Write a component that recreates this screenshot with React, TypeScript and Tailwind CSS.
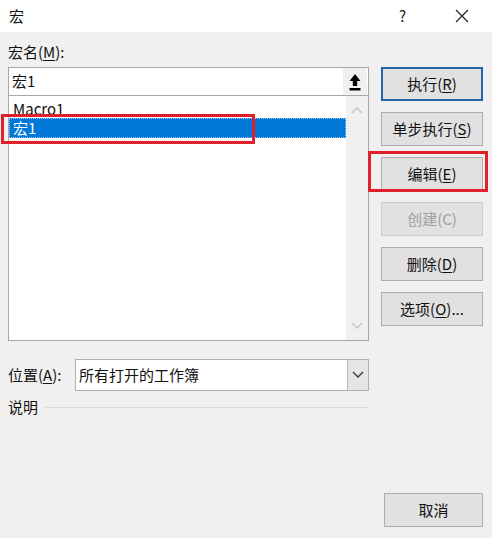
import React from "react";

const F = { fontFamily: '"Microsoft YaHei UI", "Noto Sans CJK SC", "Noto Sans", sans-serif' };

function Btn({ children, className = "", disabled = false }: { children: React.ReactNode; className?: string; disabled?: boolean }) {
  return (
    <div
      className={`h-[34px] w-[102px] flex items-center justify-center text-[15px] ${
        disabled ? "text-[#a0a0a0] border border-[#cccccc] bg-[#e1e1e1]" : "text-[#111] border border-[#adadad] bg-[#e1e1e1]"
      } ${className}`}
    >
      {children}
    </div>
  );
}

function Chevron({ up = false, color = "#c2c2c2" }: { up?: boolean; color?: string }) {
  return (
    <svg width="12" height="8" viewBox="0 0 12 8">
      <path d={up ? "M1 7 L6 2 L11 7" : "M1 1 L6 6 L11 1"} fill="none" stroke={color} strokeWidth="1.3" />
    </svg>
  );
}

export default function App() {
  return (
    <div className="relative w-[492px] h-[538px] bg-[#f0f0f0] overflow-hidden text-[#111]" style={F}>
      {/* Title bar */}
      <div className="h-[32px] bg-white flex items-center">
        <span className="ml-[9px] text-[15px]">宏</span>
        <span className="ml-auto mr-[49px] text-[15px] text-[#222]">?</span>
        <svg className="mr-[23px]" width="14" height="14" viewBox="0 0 14 14">
          <path d="M1 1 L13 13 M13 1 L1 13" stroke="#222" strokeWidth="1.2" />
        </svg>
      </div>

      <div className="flex pl-[8px]">
        {/* Left column */}
        <div className="w-[361px] flex flex-col">
          <div className="mt-[10px] h-[20px] leading-[20px] text-[15px]">
            宏名(<span className="underline underline-offset-2">M</span>):
          </div>
          <div className="mt-[5px] h-[29px] border border-[#a8a8a8] bg-white flex items-center">
            <span className="ml-[3px] text-[15px]">宏1</span>
            <div className="ml-auto mr-px h-[27px] w-[24px] bg-[#f0f0f0] flex items-center justify-center">
              <svg width="12" height="20" viewBox="0 0 12 20">
                <path d="M6 2 L11.5 9 L8.2 9 L8.2 14 L3.8 14 L3.8 9 L0.5 9 Z" fill="#000" />
                <rect x="0.5" y="16" width="11" height="2.5" fill="#000" />
              </svg>
            </div>
          </div>
          <div className="h-[245px] border border-[#a8a8a8] border-t-0 bg-white flex">
            <div className="flex-1 pt-[3px]">
              <div className="h-[19px] leading-[19px] pl-[4px] text-[15px]">Macro1</div>
              <div className="h-[20px] leading-[18px] pl-[3px] text-[15px] bg-[#0078d7] text-white border border-dotted border-[#9fc6ea]">
                宏1
              </div>
            </div>
            <div className="w-[22px] bg-[#f0f0f0] flex flex-col items-center justify-between py-[10px]">
              <Chevron up />
              <Chevron />
            </div>
          </div>

          <div className="mt-[18px] flex items-center h-[32px]">
            <span className="w-[67px] text-[15px]">
              位置(<span className="underline underline-offset-2">A</span>):
            </span>
            <div className="flex-1 h-[32px] border border-[#b0b0b0] bg-white flex items-center">
              <span className="ml-[3px] text-[15px]">所有打开的工作簿</span>
              <div className="ml-auto h-full w-[21px] bg-[#e5e5e5] border-l border-[#b8b8b8] flex items-center justify-center">
                <Chevron color="#333" />
              </div>
            </div>
          </div>

          <div className="mt-[5px] flex items-center h-[22px]">
            <span className="text-[15px]">说明</span>
            <div className="ml-[7px] flex-1 h-px bg-[#dcdcdc]" />
          </div>
        </div>

        {/* Right column */}
        <div className="ml-[12px] pt-[35px] flex flex-col gap-[11px]">
          <Btn className="!border-2 !border-[#2466a8]">
            执行(<span className="underline underline-offset-2">R</span>)
          </Btn>
          <Btn>
            单步执行(<span className="underline underline-offset-2">S</span>)
          </Btn>
          <Btn>
            编辑(<span className="underline underline-offset-2">E</span>)
          </Btn>
          <Btn disabled>创建(C)</Btn>
          <Btn>
            删除(<span className="underline underline-offset-2">D</span>)
          </Btn>
          <Btn>
            选项(<span className="underline underline-offset-2">O</span>)...
          </Btn>
        </div>
      </div>

      <div className="absolute left-[384px] top-[493px]">
        <Btn className="!w-[99px]">取消</Btn>
      </div>

      {/* Red annotation boxes */}
      <div className="absolute left-[1px] top-[114px] w-[254px] h-[30px] border-[3px] border-[#e0202a]" />
      <div className="absolute left-[368px] top-[151px] w-[120px] h-[41px] border-[3px] border-[#e0202a]" />
    </div>
  );
}
